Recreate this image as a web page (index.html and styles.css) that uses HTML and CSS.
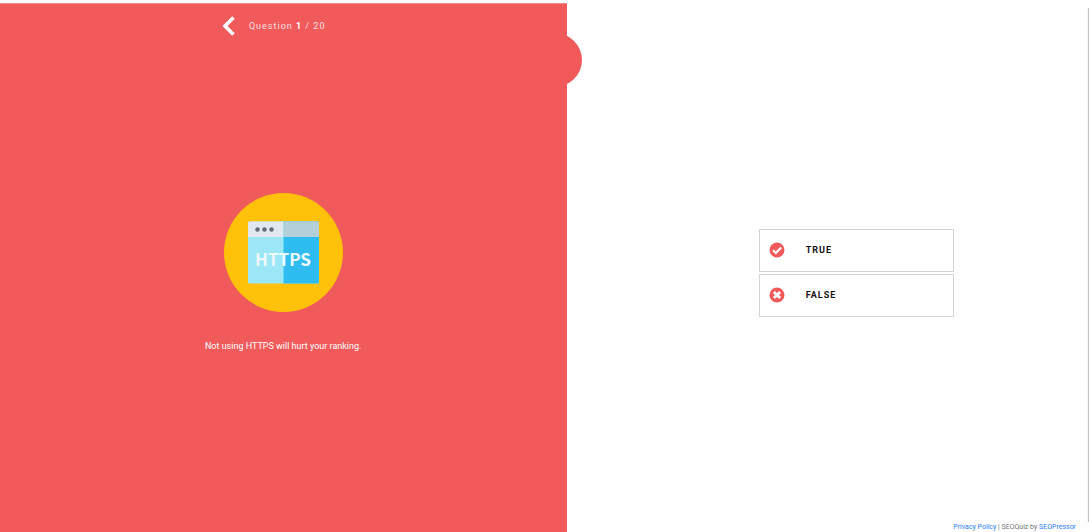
FILE: index.html
```
<!DOCTYPE html>
<html lang="en">
<head>
    <meta charset="UTF-8">
    <meta name="viewport" content="width=device-width, initial-scale=1.0">
    <title>SEOQuiz</title>
    <link rel="stylesheet" href="styles.css">
</head>
<body>
    <div class="quiz">
        <!-- Question -->
        <section class="question-panel">
            <header class="question-nav">
                <button class="back" type="button" aria-label="Previous question">
                    <svg width="14" height="20" viewBox="0 0 14 20">
                        <path d="M11.5 1.5 L3 10 L11.5 18.5" fill="none" stroke="#fff" stroke-width="3.6"/>
                    </svg>
                </button>
                <p class="counter">Question <b>1</b> / 20</p>
            </header>
            <div class="question">
                <svg class="question-icon" width="120" height="120" viewBox="0 0 120 120">
                    <circle cx="60.5" cy="59.5" r="59.5" fill="#ffc10a"/>
                    <rect x="25" y="28.5" width="71" height="62" rx="1.5" fill="#9be7f5"/>
                    <path d="M60.5 28.5 H94.5 a1.5 1.5 0 0 1 1.5 1.5 V89 a1.5 1.5 0 0 1 -1.5 1.5 H60.5 Z" fill="#2fbdf1"/>
                    <path d="M25 44 V30 a1.5 1.5 0 0 1 1.5 -1.5 H60.5 V44 Z" fill="#e1e8ee"/>
                    <path d="M60.5 28.5 H94.5 a1.5 1.5 0 0 1 1.5 1.5 V44 H60.5 Z" fill="#b3cfd7"/>
                    <circle cx="34.5" cy="36.5" r="2.2" fill="#5f6b75"/>
                    <circle cx="41.5" cy="36.5" r="2.2" fill="#5f6b75"/>
                    <circle cx="48.5" cy="36.5" r="2.2" fill="#5f6b75"/>
                    <text class="icon-text" x="60" y="73" text-anchor="middle">HTTPS</text>
                </svg>
                <p class="question-text">Not using HTTPS will hurt your ranking.</p>
            </div>
            <span class="bump"></span>
        </section>

        <!-- Answers -->
        <section class="answer-panel">
            <div class="answers">
                <button class="answer" type="button">
                    <svg width="16" height="16" viewBox="0 0 16 16">
                        <circle cx="8" cy="8" r="7.5" fill="#f05a5b"/>
                        <path d="M4 8.2 L6.9 11 L12.2 5.6" fill="none" stroke="#fff" stroke-width="2.2"/>
                    </svg>
                    <span>TRUE</span>
                </button>
                <button class="answer" type="button">
                    <svg width="16" height="16" viewBox="0 0 16 16">
                        <circle cx="8" cy="8" r="7.5" fill="#f05a5b"/>
                        <path d="M4.9 4.9 L11.1 11.1 M11.1 4.9 L4.9 11.1" fill="none" stroke="#fff" stroke-width="2.8"/>
                    </svg>
                    <span>FALSE</span>
                </button>
            </div>
            <footer class="credits"><a href="#">Privacy Policy</a> | SEOQuiz by <a href="#">SEOPressor</a></footer>
        </section>
        <div class="scroll-track"></div>
    </div>
</body>
</html>
```
FILE: styles.css
```
* {
    box-sizing: border-box;
}

body {
    margin: 0;
    font-family: Roboto, "Liberation Sans", sans-serif;
    background: #fefefe;
}

p {
    margin: 0;
}

button {
    font-family: inherit;
    cursor: pointer;
}

.quiz {
    display: flex;
    min-height: 100vh;
    padding-top: 3px;
}

.question-panel {
    position: relative;
    width: 52.1%;
    display: flex;
    flex-direction: column;
    padding-bottom: 36px;
    background: #f05a5b;
    border-top: 1px solid #f08a8b;
    color: #fff;
}

.question-nav {
    display: flex;
    justify-content: center;
    align-items: center;
    gap: 13px;
    height: 44px;
    padding-right: 20px;
}

.back {
    display: flex;
    padding: 0;
    border: none;
    background: none;
}

.counter {
    font-size: 9px;
    line-height: 12px;
    letter-spacing: 1px;
    color: #fde0e0;
}

.counter b {
    color: #fff;
}

.question {
    flex: 1;
    display: flex;
    flex-direction: column;
    justify-content: center;
    align-items: center;
    gap: 25px;
    padding: 3px 1px 0 0;
}

.icon-text {
    font: bold 17px "Noto Sans CJK SC", sans-serif;
    fill: #eefafd;
}

.question-text {
    font-size: 9px;
    line-height: 16px;
}

/* Half circle on the panel edge */
.bump {
    position: absolute;
    top: 29px;
    right: -15px;
    width: 54px;
    height: 54px;
    border-radius: 50%;
    background: #f05a5b;
}

.answer-panel {
    flex: 1;
    display: flex;
    flex-direction: column;
    padding-top: 46px;
}

.answers {
    flex: 1;
    display: flex;
    flex-direction: column;
    justify-content: center;
    align-items: center;
    gap: 2px;
    padding-left: 58px;
}

.answer {
    display: flex;
    align-items: center;
    gap: 21px;
    width: 195px;
    height: 43px;
    padding: 0 9px;
    border: 1px solid #d4d4d4;
    background: #fff;
    color: #111;
    font-size: 9px;
    font-weight: bold;
    letter-spacing: 1px;
}

.credits {
    height: 36px;
    padding: 26px 11px 0 0;
    font-size: 7px;
    line-height: 10px;
    text-align: right;
    color: #777;
}

.credits a {
    color: #2a7fff;
    text-decoration: none;
}

.scroll-track {
    width: 2px;
    margin: 5px 0 10px;
    background: #f4f4f4;
    border-right: 1px solid #c1c1c1;
}
```
